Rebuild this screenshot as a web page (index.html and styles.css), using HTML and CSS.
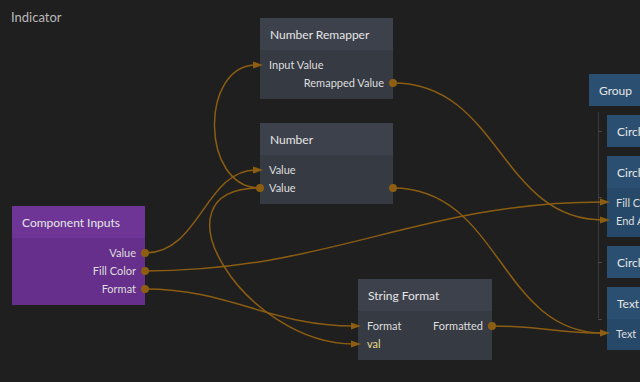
FILE: index.html
```html
<!DOCTYPE html>
<html lang="en">
<head>
    <meta charset="UTF-8">
    <meta name="viewport" content="width=device-width, initial-scale=1.0">
    <title>Indicator</title>
    <link rel="stylesheet" href="styles.css">
</head>
<body>
    <div class="canvas">
        <div class="title">Indicator</div>

        <div class="node gray n-remap">
            <div class="node-head">Number Remapper</div>
            <div class="node-body">
                <div class="port">Input Value</div>
                <div class="port out">Remapped Value</div>
            </div>
        </div>

        <div class="node gray n-number">
            <div class="node-head">Number</div>
            <div class="node-body">
                <div class="port">Value</div>
                <div class="port">Value</div>
            </div>
        </div>

        <div class="node purple n-inputs">
            <div class="node-head">Component Inputs</div>
            <div class="node-body">
                <div class="port out">Value</div>
                <div class="port out">Fill Color</div>
                <div class="port out">Format</div>
            </div>
        </div>

        <div class="node gray n-format">
            <div class="node-head">String Format</div>
            <div class="node-body">
                <div class="port split"><span>Format</span><span>Formatted</span></div>
                <div class="port hl">val</div>
            </div>
        </div>

        <div class="tree">
            <div class="node blue">
                <div class="node-head">Group</div>
            </div>
            <div class="children">
                <div class="node blue child">
                    <div class="node-head">Circle</div>
                </div>
                <div class="node blue child">
                    <div class="node-head">Circle</div>
                    <div class="node-body">
                        <div class="port">Fill Color</div>
                        <div class="port">End Angle</div>
                    </div>
                </div>
                <div class="node blue child">
                    <div class="node-head">Circle</div>
                </div>
                <div class="node blue child last">
                    <div class="node-head">Text</div>
                    <div class="node-body">
                        <div class="port">Text</div>
                    </div>
                </div>
            </div>
        </div>

        <svg class="wires" width="640" height="382" viewBox="0 0 640 382">
            <g class="wire">
                <path d="M145,253 C200,253 205,170 256,170"/>
                <path d="M260,188 C200,188 200,65 256,65"/>
                <path d="M260,188 C147,188 245,344 354,344"/>
                <path d="M145,271 C330,271 420,202 603,202"/>
                <path d="M145,289 C230,289 270,326 354,326"/>
                <path d="M393,83 C500,83 500,220 603,220"/>
                <path d="M393,188 C500,188 500,333 603,333"/>
                <path d="M492,326 C545,326 555,333 603,333"/>
            </g>
            <g class="arrow">
                <polygon points="253,166.5 263,170 253,173.5"/>
                <polygon points="253,61.5 263,65 253,68.5"/>
                <polygon points="351,340.5 361,344 351,347.5"/>
                <polygon points="351,322.5 361,326 351,329.5"/>
                <polygon points="600,198.5 610,202 600,205.5"/>
                <polygon points="600,216.5 610,220 600,223.5"/>
                <polygon points="600,329.5 610,333 600,336.5"/>
            </g>
            <g class="dot">
                <circle cx="145" cy="253" r="4"/>
                <circle cx="145" cy="271" r="4"/>
                <circle cx="145" cy="289" r="4"/>
                <circle cx="393" cy="83" r="4"/>
                <circle cx="260" cy="188" r="4"/>
                <circle cx="393" cy="188" r="4"/>
                <circle cx="492" cy="326" r="4"/>
            </g>
        </svg>
    </div>
</body>
</html>
```

FILE: styles.css
```css
body {
    margin: 0;
    padding: 0;
    background-color: #1f1f1f;
    font-family: Lato, 'Open Sans', sans-serif;
}

.canvas {
    position: relative;
    width: 640px;
    height: 382px;
    overflow: hidden;
    background-color: #1f1f1f;
}

.title {
    position: absolute;
    left: 11px;
    top: 9px;
    font-size: 13px;
    color: #b9b9b9;
}

.node {
    width: 133px;
}

.n-remap,
.n-number,
.n-inputs,
.n-format {
    position: absolute;
}

.n-remap { left: 260px; top: 18px; }
.n-number { left: 260px; top: 123px; }
.n-inputs { left: 12px; top: 206px; }
.n-format { left: 358px; top: 279px; width: 134px; }

.node-head {
    height: 32px;
    display: flex;
    align-items: center;
    padding: 0 10px;
    font-size: 12px;
    color: #e6e6e6;
    white-space: nowrap;
}

.node-body {
    padding: 6px 0 7px;
}

.port {
    height: 18px;
    line-height: 18px;
    padding: 0 9px;
    font-size: 11px;
    color: #dedede;
    white-space: nowrap;
}

.port.out {
    text-align: right;
}

.port.split {
    display: flex;
    justify-content: space-between;
}

.port.hl {
    color: #e9dc8e;
}

.gray .node-head { background-color: #3d414b; }
.gray .node-body { background-color: #363a43; }

.purple .node-head { background-color: #6e3596; }
.purple .node-body { background-color: #662f8b; }

.blue .node-head { background-color: #2b4f70; }
.blue .node-body { background-color: #274969; }

/* scene tree on the right */
.tree {
    position: absolute;
    left: 589px;
    top: 74px;
}

.tree .node {
    width: 140px;
}

.children {
    position: relative;
    margin: 6px 0 0 9px;
    padding: 3px 0 0 9px;
    display: flex;
    flex-direction: column;
    gap: 9px;
}

.children::before {
    content: "";
    position: absolute;
    left: 0;
    top: 0;
    bottom: 32px;
    width: 1px;
    background-color: #3b3b3b;
}

.child {
    position: relative;
}

.child::after {
    content: "";
    position: absolute;
    left: -9px;
    top: 50%;
    width: 4px;
    height: 1px;
    background-color: #474747;
}

.wires {
    position: absolute;
    left: 0;
    top: 0;
    pointer-events: none;
}

.wire path {
    fill: none;
    stroke: #8b5d13;
    stroke-width: 1.5;
}

.arrow polygon,
.dot circle {
    fill: #8d5e12;
}
```
